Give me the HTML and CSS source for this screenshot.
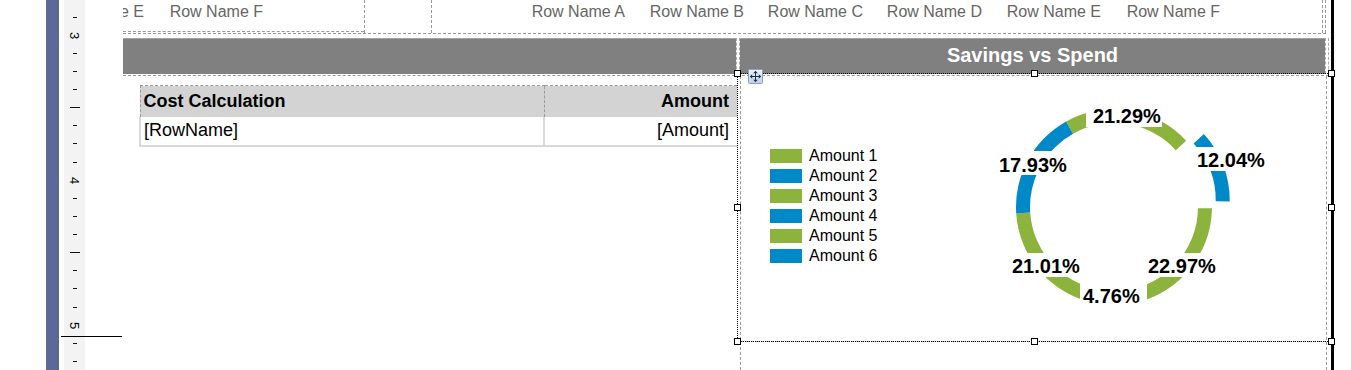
FILE: index.html
```html
<!DOCTYPE html>
<html>
<head>
    <meta charset="UTF-8">
    <title>Report Designer</title>
    <link rel="stylesheet" href="styles.css">
</head>
<body>
<div class="app">
    <div class="gutter"></div>
    <div class="rail"></div>
    <div class="ruler">
        <span class="tick"><i></i></span>
        <span class="tick"><b>3</b></span>
        <span class="tick"><i></i></span>
        <span class="tick"><i></i></span>
        <span class="tick"><i></i></span>
        <span class="tick long"><i></i></span>
        <span class="tick"><i></i></span>
        <span class="tick"><i></i></span>
        <span class="tick"><i></i></span>
        <span class="tick"><b>4</b></span>
        <span class="tick"><i></i></span>
        <span class="tick"><i></i></span>
        <span class="tick"><i></i></span>
        <span class="tick long"><i></i></span>
        <span class="tick"><i></i></span>
        <span class="tick"><i></i></span>
        <span class="tick"><i></i></span>
        <span class="tick"><b>5</b></span>
        <span class="tick"><i></i></span>
        <span class="tick"><i></i></span>
    </div>
    <div class="viewport">
        <div class="report">
            <div class="band">
                <div class="band-left">
                    <span class="rn">Row Name E</span>
                    <span class="rn">Row Name F</span>
                </div>
                <div class="band-mid"></div>
                <div class="band-right">
                    <span class="rn">Row Name A</span>
                    <span class="rn">Row Name B</span>
                    <span class="rn">Row Name C</span>
                    <span class="rn">Row Name D</span>
                    <span class="rn">Row Name E</span>
                    <span class="rn">Row Name F</span>
                </div>
                <div class="band-edge"></div>
            </div>

            <div class="title-row">
                <div class="bar bar-left"></div>
                <div class="bar-split"></div>
                <div class="bar bar-right">Savings vs Spend</div>
                <div class="bar-edge"></div>
            </div>

            <div class="body-row">
                <div class="body-left">
                    <table class="grid">
                        <tr>
                            <th class="name">Cost Calculation</th>
                            <th class="amt">Amount</th>
                        </tr>
                        <tr>
                            <td class="name">[RowName]</td>
                            <td class="amt">[Amount]</td>
                        </tr>
                    </table>
                </div>
                <div class="chart">
                    <div class="plot">
                        <ul class="legend">
                            <li><span class="sw green"></span>Amount 1</li>
                            <li><span class="sw blue"></span>Amount 2</li>
                            <li><span class="sw green"></span>Amount 3</li>
                            <li><span class="sw blue"></span>Amount 4</li>
                            <li><span class="sw green"></span>Amount 5</li>
                            <li><span class="sw blue"></span>Amount 6</li>
                        </ul>
                        <svg class="donut" width="290" height="265" viewBox="990 76 290 265">
                            <path class="g" d="M1066.19 121.46 A98 98 0 0 1 1186.16 140.69 L1175.85 150.17 A84 84 0 0 0 1073.02 133.68 Z"/>
                            <path class="b" d="M1203.91 133.92 A98 98 0 0 1 1229.74 201.56 L1215.74 201.37 A84 84 0 0 0 1193.60 143.40 Z"/>
                            <path class="g" d="M1211.99 208.33 A98 98 0 0 1 1125.14 304.36 L1123.55 290.45 A84 84 0 0 0 1197.99 208.14 Z"/>
                            <path class="b" d="M1125.14 304.36 A98 98 0 0 1 1095.96 303.32 L1098.53 289.56 A84 84 0 0 0 1123.55 290.45 Z"/>
                            <path class="g" d="M1095.96 303.32 A98 98 0 0 1 1016.21 213.41 L1030.18 212.49 A84 84 0 0 0 1098.53 289.56 Z"/>
                            <path class="b" d="M1016.21 213.41 A98 98 0 0 1 1066.19 121.46 L1073.02 133.68 A84 84 0 0 0 1030.18 212.49 Z"/>

                            <rect x="1086" y="103" width="76" height="24"/>
                            <text x="1093" y="123">21.29%</text>
                            <rect x="1194" y="147" width="74" height="24"/>
                            <text x="1197" y="167">12.04%</text>
                            <rect x="996" y="151" width="73" height="24"/>
                            <text x="999" y="172">17.93%</text>
                            <rect x="1145" y="253" width="73" height="24"/>
                            <text x="1148" y="273">22.97%</text>
                            <rect x="1009" y="253" width="72" height="24"/>
                            <text x="1012" y="273">21.01%</text>
                            <rect x="1080" y="283" width="67" height="24"/>
                            <text x="1083" y="303">4.76%</text>
                        </svg>
                    </div>
                </div>
            </div>

            <!-- selected chart item -->
            <div class="selection">
                <span class="handle tl"></span>
                <span class="handle tc"></span>
                <span class="handle tr"></span>
                <span class="handle ml"></span>
                <span class="handle mr"></span>
                <span class="handle bl"></span>
                <span class="handle bc"></span>
                <span class="handle br"></span>
            </div>
            <div class="move-grip">
                <svg width="15" height="15" viewBox="0 0 15 15">
                    <defs>
                        <linearGradient id="mg" x1="0" y1="0" x2="0" y2="1">
                            <stop offset="0" stop-color="#eef3fb"/>
                            <stop offset="1" stop-color="#bfd0e8"/>
                        </linearGradient>
                    </defs>
                    <rect x="0.5" y="0.5" width="14" height="14" rx="1" fill="url(#mg)" stroke="#8ca3c4"/>
                    <path d="M7.5 3.5v8M3.5 7.5h8" stroke="#233248" stroke-width="1"/>
                    <path d="M7.5 1.8l-2.3 2.4h4.6z M7.5 13.2l-2.3-2.4h4.6z M1.8 7.5l2.4-2.3v4.6z M13.2 7.5l-2.4-2.3v4.6z" fill="#233248"/>
                </svg>
            </div>
        </div>
    </div>
    <div class="ruler-mark"></div>
</div>
</body>
</html>
```

FILE: styles.css
```css
* {
    box-sizing: border-box;
}
body {
    margin: 0;
    background: #fff;
    font-family: "Liberation Sans", Arial, sans-serif;
}
.app {
    display: flex;
    height: 370px;
    overflow: hidden;
    position: relative;
}
.gutter {
    width: 46px;
    flex: none;
}
.rail {
    width: 13px;
    flex: none;
    background: #5c6997;
}
.ruler {
    width: 21px;
    flex: none;
    margin-left: 5px;
    padding-top: 8px;
    background: #f3f3f3;
    display: flex;
    flex-direction: column;
}
.tick {
    height: 18.125px;
    flex: none;
    display: flex;
    align-items: center;
    justify-content: center;
}
.tick i {
    width: 4px;
    height: 1px;
    background: #111;
}
.tick.long i {
    width: 10px;
}
.tick b {
    font-weight: normal;
    font-size: 13px;
    line-height: 13px;
    color: #000;
    transform: rotate(90deg);
}
.ruler-mark {
    position: absolute;
    left: 61px;
    top: 336px;
    width: 61px;
    height: 1px;
    background: #000;
}
.viewport {
    flex: 1;
    margin-left: 38px;
    overflow: hidden;
}
.report {
    position: relative;
    width: 1211px;
    height: 370px;
    border-right: 3px solid #000;
}

/* band of the table above */
.band {
    display: flex;
    width: 1203px;
    height: 34px;
    border-bottom: 1px dashed #9a9a9a;
}
.band-left {
    width: 241px;
    height: 32px;
    flex: none;
    display: flex;
    justify-content: flex-end;
    padding-right: 97px;
    border-bottom: 1px dashed #9a9a9a;
}
.band-mid {
    width: 68px;
    flex: none;
    border-left: 1px dashed #9a9a9a;
    border-right: 1px dashed #9a9a9a;
}
.band-right {
    flex: 1;
    display: flex;
    justify-content: flex-end;
    padding-right: 98px;
    border-right: 1px dashed #9a9a9a;
}
.band-edge {
    width: 3px;
    flex: none;
    border-right: 1px dashed #9a9a9a;
}
.rn {
    flex: none;
    width: 119px;
    padding: 3px 4px 0 0;
    text-align: right;
    white-space: nowrap;
    font-size: 16px;
    line-height: 18px;
    color: #666;
}

/* grey title bar */
.title-row {
    display: flex;
    width: 1206px;
    height: 38px;
    margin-top: 4px;
    padding-bottom: 1px;
    border-bottom: 1px dashed #9a9a9a;
}
.bar {
    background: #808080;
    border-top: 1px solid #a3a3a3;
}
.bar-left {
    width: 613px;
}
.bar-split {
    width: 4px;
    border-left: 1px dashed #aaa;
    border-right: 1px dashed #aaa;
}
.bar-right {
    width: 585px;
    display: flex;
    align-items: center;
    justify-content: center;
    padding-bottom: 2px;
    color: #fff;
    font-weight: bold;
    font-size: 20px;
}
.bar-edge {
    width: 4px;
    border-left: 1px dashed #aaa;
    border-right: 1px dashed #aaa;
}

/* body */
.body-row {
    display: flex;
    height: 294px;
}
.body-left {
    width: 617px;
    flex: none;
    padding: 9px 0 0 16px;
}
.grid {
    width: 598px;
    border-collapse: collapse;
    font-size: 18px;
}
.grid th {
    height: 31px;
    padding: 1px 3px 0;
    background: #d3d3d3;
    text-align: left;
    border-top: 1px dashed #999;
    border-left: 1px dashed #999;
}
.grid td {
    height: 29px;
    padding: 0 3px;
    border-left: 2px solid #d9d9d9;
    border-bottom: 2px solid #d9d9d9;
}
.grid .name {
    width: 404px;
}
.grid .amt {
    text-align: right;
    padding-right: 8px;
}
.chart {
    width: 587px;
    flex: none;
    border-left: 1px dashed #999;
    border-right: 1px dashed #999;
}
.plot {
    height: 266px;
    display: flex;
    align-items: center;
    border-bottom: 1px dashed #999;
}
.legend {
    list-style: none;
    width: 110px;
    flex: none;
    margin: 0 0 6px 29px;
    padding: 0;
    font-size: 16px;
}
.legend li {
    display: flex;
    align-items: center;
    gap: 7px;
    height: 20px;
}
.sw {
    width: 32px;
    height: 14px;
}
.green {
    background: #8cb43c;
}
.blue {
    background: #0089c8;
}
.donut {
    flex: none;
    margin-left: 110px;
}
.donut .g {
    fill: #8cb43c;
}
.donut .b {
    fill: #0089c8;
}
.donut rect {
    fill: #fff;
}
.donut text {
    font-family: "Liberation Sans", Arial, sans-serif;
    font-weight: bold;
    font-size: 20px;
    fill: #000;
}

/* selection chrome */
.selection {
    position: absolute;
    left: 614px;
    top: 73px;
    width: 595px;
    height: 269px;
    border: 1px dotted #000;
}
.handle {
    position: absolute;
    width: 7px;
    height: 7px;
    background: #fff;
    border: 1px solid #000;
}
.tl, .tc, .tr { top: -4px; }
.bl, .bc, .br { bottom: -4px; }
.ml, .mr { top: calc(50% - 3.5px); }
.tl, .ml, .bl { left: -4px; }
.tr, .mr, .br { right: -4px; }
.tc, .bc { left: calc(50% - 3.5px); }
.move-grip {
    position: absolute;
    left: 625px;
    top: 69px;
    width: 15px;
    height: 15px;
}
.move-grip svg {
    display: block;
}
```
